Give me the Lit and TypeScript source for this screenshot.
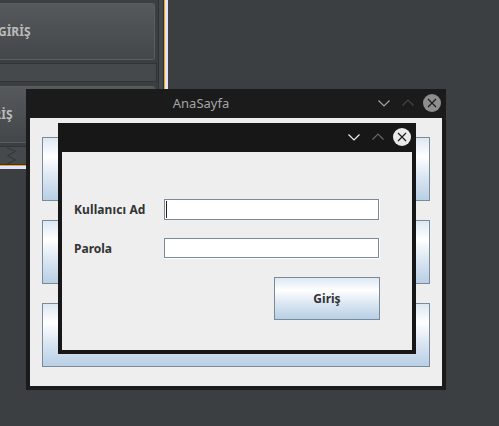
import { LitElement, html, css, svg } from "lit";
import { customElement, property } from "lit/decorators.js";

@customElement("window-controls")
class WindowControls extends LitElement {
  static styles = css`
    :host { display: block; height: 20px; }
    svg { display: block; }
    .line { fill: none; stroke-width: 1.2; }
    .down { stroke: var(--down); }
    .up { stroke: var(--up); }
    .disc { fill: var(--disc); }
    .cross { stroke: #1b1b1b; }
  `;
  render() {
    return html`<svg width="70" height="20" viewBox="0 0 70 20">
      ${svg`<path class="line down" d="M6.5 7.5 L12 13 L17.5 7.5"/>
      <path class="line up" d="M30.5 12.5 L36 7 L41.5 12.5"/>
      <circle class="disc" cx="60" cy="10" r="9"/>
      <path class="line cross" d="M56 6 L64 14 M64 6 L56 14"/>`}
    </svg>`;
  }
}

@customElement("desktop-window")
class DesktopWindow extends LitElement {
  @property() heading = "";
  static styles = css`
    :host { display: flex; flex-direction: column; box-sizing: border-box; padding: 0 4px 4px; background: var(--frame); }
    .bar { height: 29px; flex: none; display: grid; grid-template-columns: 70px 1fr 70px; align-items: center; }
    .title { grid-column: 2; text-align: center; font: 13px/20px "Noto Sans", sans-serif; color: #a2a5a7; padding-right: 70px; margin-top: -2px; }
    window-controls { grid-column: 3; margin-top: -1px; }
    .body { flex: 1; background: #eee; min-height: 0; }
  `;
  render() {
    return html`<div class="bar"><div class="title">${this.heading}</div><window-controls></window-controls></div>
      <div class="body"><slot></slot></div>`;
  }
}

@customElement("app-root")
class AppRoot extends LitElement {
  static styles = css`
    :host { display: block; position: relative; width: 499px; height: 426px; overflow: hidden; background: #3c3f41; font: bold 12px/16px "Noto Sans", sans-serif; }
    .designer { box-sizing: border-box; width: 168px; height: 169px; display: flex; border-right: 3px solid #e2e2ff; border-bottom: 3px solid #e2e2ff; }
    .surface { box-sizing: border-box; width: 165px; height: 166px; display: flex; border-right: 1px solid #ffa500; border-bottom: 1px solid #ffa500; }
    .column { width: 158px; padding-top: 3px; box-sizing: border-box; }
    .side { box-sizing: border-box; width: 6px; border-left: 1px solid #2e3132; border-right: 1px solid #303334; background: #45494b; }
    .dark { box-sizing: border-box; width: 155px; height: 57px; border: 1px solid #5b5e60; border-left: 0; border-radius: 0 3px 3px 0; background: linear-gradient(#55595b, #434749); color: #bbb; display: flex; align-items: center; }
    .dark span { position: relative; white-space: nowrap; }
    .first span { left: -2px; }
    .second span { left: -20px; }
    .strip { box-sizing: border-box; width: 157px; height: 19px; margin: 3px 0 4px; border: 1px solid #323536; border-left: 0; background: #45494b; }
    .foot { margin: 3px 0 0; }
    .foot svg { display: block; }
    .zig { fill: none; stroke: #303334; stroke-width: 1; }
    .main, .login { position: absolute; }
    .main { left: 26px; top: 89px; width: 420px; height: 301px; --frame: #1b1b1b; --down: #a5a5a5; --up: #444; --disc: #8e8e8e; }
    .login { left: 58px; top: 123px; width: 358px; height: 231px; --frame: #171717; --down: #f0f0f0; --up: #686868; --disc: #e9e9e9; }
    .stack { display: grid; gap: 19px; padding: 19px 12px; }
    .blue { box-sizing: border-box; border: 1px solid #7a8a99; background: linear-gradient(#dde8f3 0%, #fff 30%, #dde8f3 60%, #b8cfe5 100%); height: 64px; }
    .form { display: grid; grid-template-columns: 90px 216px; row-gap: 18px; padding: 47px 12px 0; color: #333; }
    .label { line-height: 21px; white-space: nowrap; }
    .wide { letter-spacing: 0.1px; }
    .field { box-sizing: border-box; height: 21px; border-right: 1px solid #fff; border-bottom: 1px solid #fff; display: grid; }
    .input { box-sizing: border-box; border: 1px solid #7a8a99; background: #fff; padding: 1px; }
    .caret { width: 1px; height: 17px; background: #222; }
    .submit { grid-column: 2; justify-self: end; width: 106px; height: 43px; display: grid; place-items: center; }
  `;
  render() {
    return html`
      <div class="designer"><div class="surface">
        <div class="column">
          <div class="dark first"><span>GİRİŞ</span></div>
          <div class="strip"></div>
          <div class="dark second"><span>GİRİŞ</span></div>
          <div class="strip foot"><svg width="20" height="17">${svg`<path class="zig" d="M7 0.5 L15.5 4.5 L7.5 8.5 L15.5 13 L7 17"/>`}</svg></div>
        </div>
        <div class="side"></div>
      </div></div>
      <desktop-window class="main" heading="AnaSayfa">
        <div class="stack"><div class="blue"></div><div class="blue"></div><div class="blue"></div></div>
      </desktop-window>
      <desktop-window class="login">
        <div class="form">
          <div class="label wide">Kullanıcı Ad</div><div class="field"><div class="input"><div class="caret"></div></div></div>
          <div class="label">Parola</div><div class="field"><div class="input"></div></div>
          <div class="blue submit">Giriş</div>
        </div>
      </desktop-window>`;
  }
}
